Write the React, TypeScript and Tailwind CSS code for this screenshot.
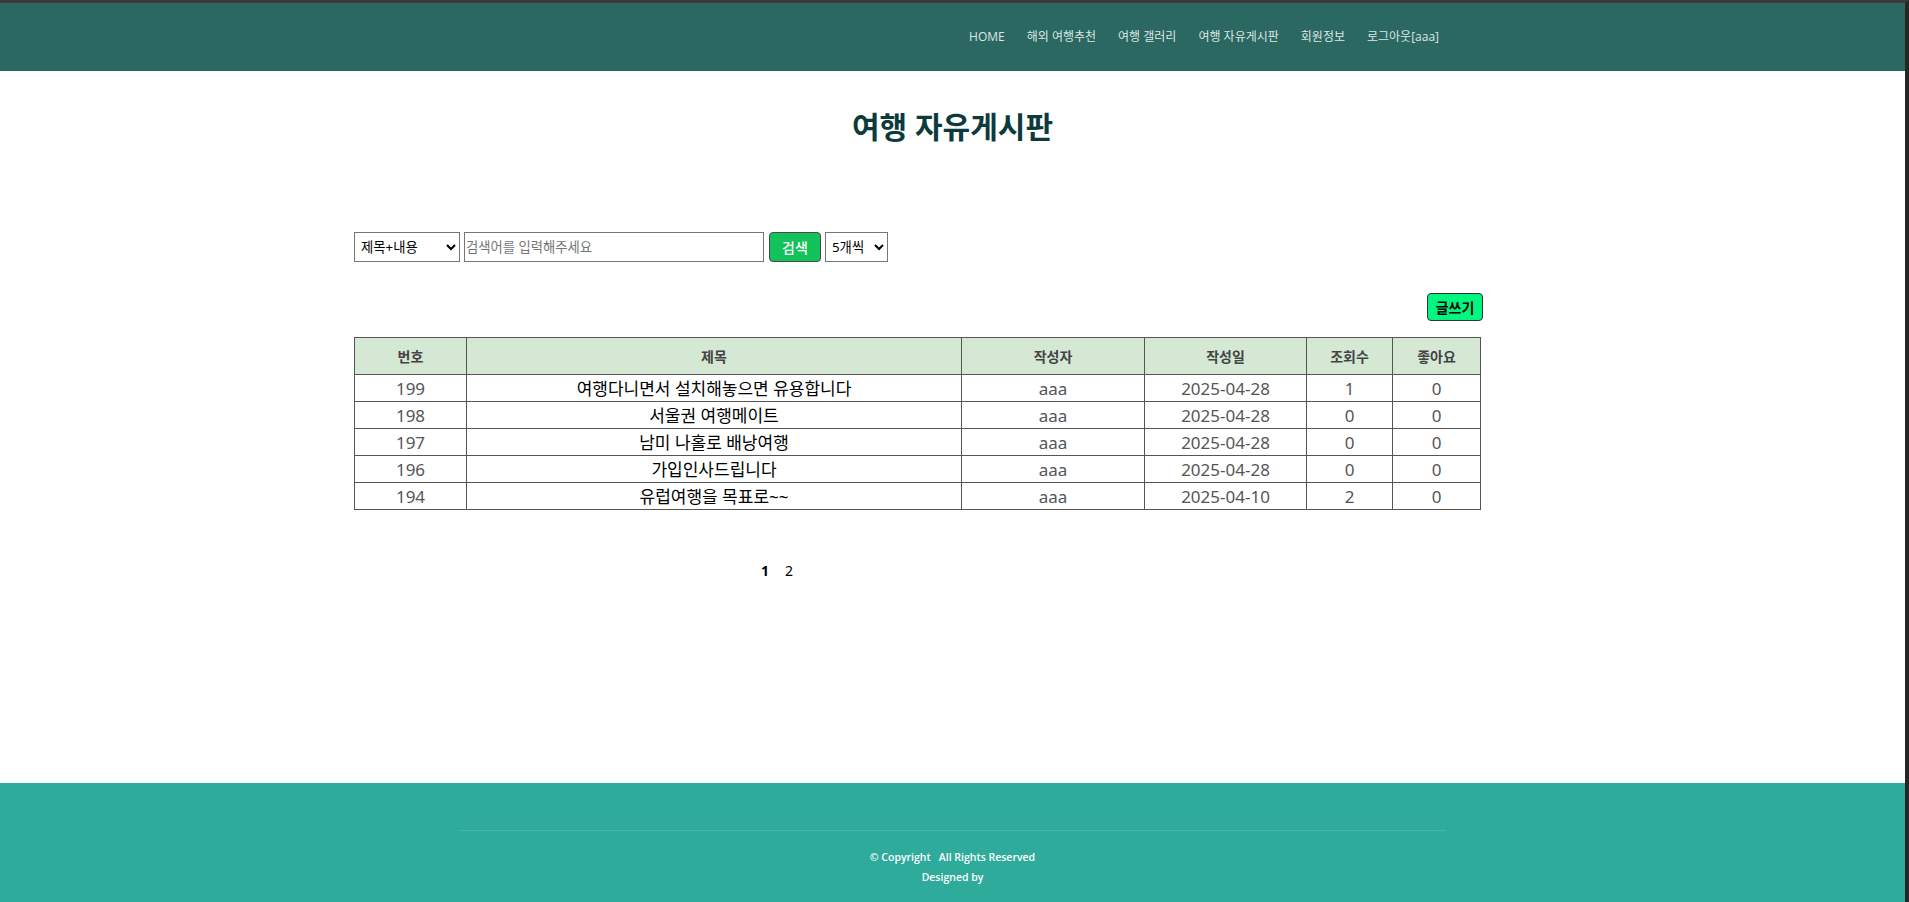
import { useState } from 'react';

interface Post {
  id: number;
  title: string;
  writer: string;
  date: string;
  views: number;
  likes: number;
}

const posts: Post[] = [
  { id: 199, title: '여행다니면서 설치해놓으면 유용합니다', writer: 'aaa', date: '2025-04-28', views: 1, likes: 0 },
  { id: 198, title: '서울권 여행메이트', writer: 'aaa', date: '2025-04-28', views: 0, likes: 0 },
  { id: 197, title: '남미 나홀로 배낭여행', writer: 'aaa', date: '2025-04-28', views: 0, likes: 0 },
  { id: 196, title: '가입인사드립니다', writer: 'aaa', date: '2025-04-28', views: 0, likes: 0 },
  { id: 194, title: '유럽여행을 목표로~~', writer: 'aaa', date: '2025-04-10', views: 2, likes: 0 },
];

const navItems = ['HOME', '해외 여행추천', '여행 갤러리', '여행 자유게시판', '회원정보', '로그아웃[aaa]'];

const font = "font-['Open_Sans','Noto_Sans_CJK_KR',sans-serif]";
const bodyFont = "font-['Noto_Sans','Noto_Sans_CJK_KR',sans-serif]";

export default function App() {
  const [keyword, setKeyword] = useState('');

  return (
    <div className={`h-[902px] flex flex-col bg-white border-t-[3px] border-t-[#3a3a3a] border-r-4 border-r-[#262626] ${bodyFont}`}>
      <header className="h-[68px] bg-[#2b6862] flex items-center justify-end pr-[466px]">
        <nav className={`flex items-center gap-[22px] text-[12px] text-[#dce6e4] ${font}`}>
          {navItems.map((item) => (
            <a key={item} href="#" className="whitespace-nowrap">
              {item}
            </a>
          ))}
        </nav>
      </header>

      <main className="flex-1">
        <h1 className={`mt-[38px] text-center text-[30px] leading-[36px] font-bold text-[#0c3a3d] ${bodyFont}`}>
          여행 자유게시판
        </h1>

        <div className="w-[1197px] mx-auto">
          <div className="mt-[87px] flex items-center gap-[4px] text-[13.33px] text-black">
            <select className="w-[106px] h-[30px] border border-[#767676] bg-white pl-[2px]">
              <option>제목+내용</option>
              <option>제목</option>
              <option>내용</option>
            </select>
            <input
              value={keyword}
              onChange={(e) => setKeyword(e.target.value)}
              placeholder="검색어를 입력해주세요"
              className="w-[300px] h-[30px] border border-[#767676] px-[1px] placeholder:text-[#757575]"
            />
            <button className="w-[52px] h-[30px] ml-[1px] rounded-[4px] border border-[#4a4a4a] bg-[#12c25a] text-white text-[14px] font-medium">
              검색
            </button>
            <select className="w-[63px] h-[30px] border border-[#767676] bg-white pl-[2px]">
              <option>5개씩</option>
              <option>10개씩</option>
            </select>
          </div>

          <div className="w-[1129px] mt-[31px] flex justify-end">
            <button className="w-[56px] h-[28px] rounded-[4px] border border-[#333] bg-[#00f77f] text-[14px] font-bold text-black">
              글쓰기
            </button>
          </div>

          <table className="mt-[16px] w-[1126px] border-collapse border border-[#555] table-fixed">
            <colgroup>
              <col className="w-[112px]" />
              <col className="w-[495px]" />
              <col className="w-[183px]" />
              <col className="w-[162px]" />
              <col className="w-[86px]" />
              <col className="w-[88px]" />
            </colgroup>
            <thead>
              <tr className="bg-[#d4e8d4] text-[14px] font-bold text-[#444] h-[37px]">
                {['번호', '제목', '작성자', '작성일', '조회수', '좋아요'].map((h) => (
                  <th key={h} className="border border-[#555] font-bold p-0">
                    {h}
                  </th>
                ))}
              </tr>
            </thead>
            <tbody className="text-[17px] text-center">
              {posts.map((p) => (
                <tr key={p.id} className="h-[27px]">
                  <td className="border border-[#555] p-0 leading-[25px] text-[#555]">{p.id}</td>
                  <td className="border border-[#555] p-0 leading-[25px] text-black">{p.title}</td>
                  <td className="border border-[#555] p-0 leading-[25px] text-[#555]">{p.writer}</td>
                  <td className="border border-[#555] p-0 leading-[25px] text-[#555]">{p.date}</td>
                  <td className="border border-[#555] p-0 leading-[25px] text-[#555]">{p.views}</td>
                  <td className="border border-[#555] p-0 leading-[25px] text-[#555]">{p.likes}</td>
                </tr>
              ))}
            </tbody>
          </table>

          <div className="mt-[51px] pl-[407px] flex items-center gap-[16px] text-[14px] leading-[20px] text-black">
            <a href="#" className="font-bold">1</a>
            <a href="#">2</a>
          </div>
        </div>
      </main>

      <footer className={`h-[119px] bg-[#2fab9c] pt-[47px] ${font}`}>
        <div className="w-[987px] mx-auto border-t border-[#47b6a8]" />
        <div className="mt-[16px] text-center text-white text-[10.5px] font-semibold leading-[20px]">
          <div>© Copyright&nbsp;&nbsp;&nbsp;All Rights Reserved</div>
          <div>Designed by</div>
        </div>
      </footer>
    </div>
  );
}
